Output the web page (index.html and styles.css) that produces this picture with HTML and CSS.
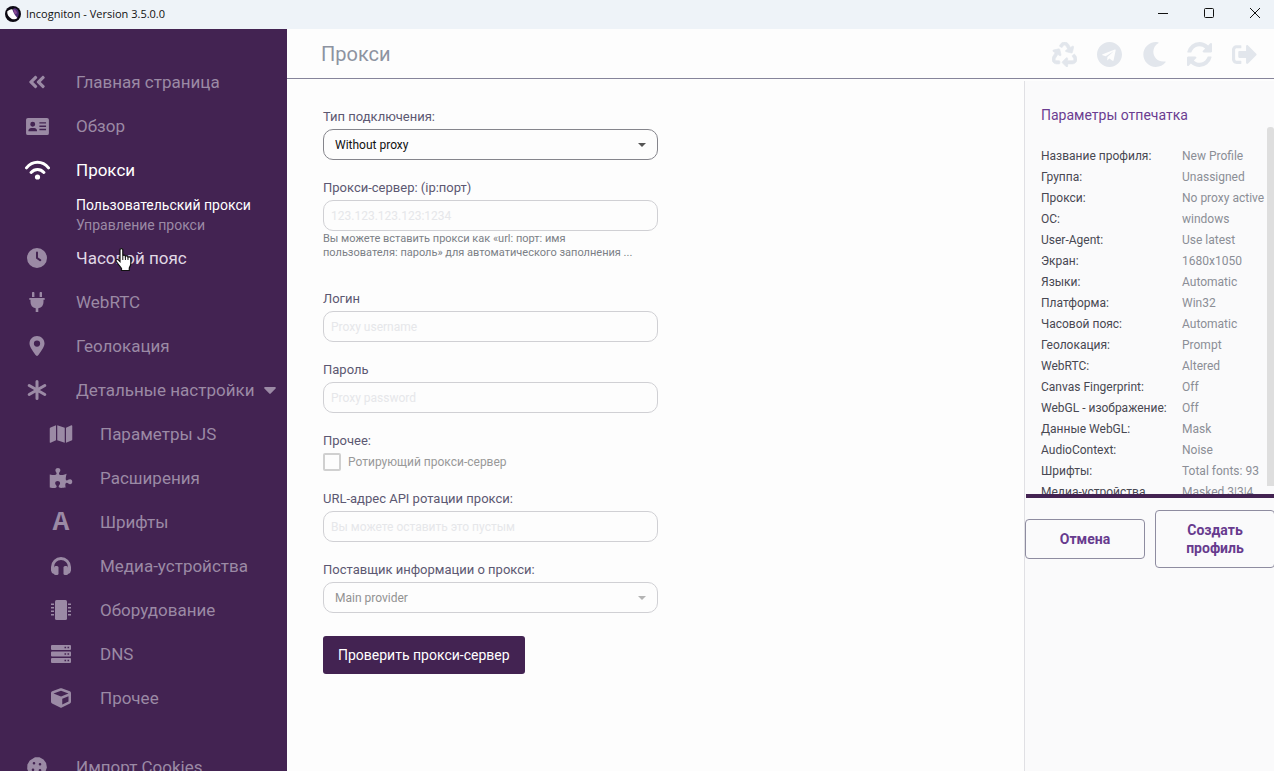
FILE: index.html
```html
<!DOCTYPE html>
<html lang="ru">
<head>
    <meta charset="UTF-8">
    <meta name="viewport" content="width=device-width, initial-scale=1.0">
    <title>Incogniton - Version 3.5.0.0</title>
    <link rel="stylesheet" href="styles.css">
</head>
<body>
<div class="titlebar">
    <svg class="app-logo" viewBox="0 0 16 16">
        <circle cx="8" cy="8" r="8" fill="#0b0812"/>
        <path d="M8.5 2.5C11 1.6 14 4 13.8 7.6c0 2-1 4-2.6 5.2L7 6z" fill="#4b2c74"/>
        <path d="M8.3 3c1.6.4 3.4 2.2 3.9 4.2l-2.6 1z" fill="#8a4a94"/>
        <path d="M2.2 5.6C3.4 4 5.6 3 7.4 3.3c.8 3.2 2.2 6 5 8.6-1.6 1.5-4 1.8-6 .8C3.800 11.400 2 8.600 2.200 5.600z" fill="#fff"/>
    </svg>
    <span class="app-name">Incogniton - Version 3.5.0.0</span>
    <div class="window-buttons">
        <button aria-label="Minimize"><svg viewBox="0 0 10 10"><path d="M0 5.500h10"/></svg></button>
        <button aria-label="Maximize"><svg viewBox="0 0 10 10"><rect x=".5" y=".5" width="9" height="9" rx="1"/></svg></button>
        <button aria-label="Close"><svg viewBox="0 0 10 10"><path d="M0 0l10 10M10 0L0 10"/></svg></button>
    </div>
</div>

<div class="app">
    <nav class="sidebar">
        <a href="#" class="nav-item">
            <svg class="icon" viewBox="0 0 448 512"><path d="M223.700 239l136-136c9.400-9.400 24.600-9.400 33.900 0l22.600 22.600c9.400 9.400 9.400 24.600 0 33.900L319.900 256l96.400 96.400c9.400 9.400 9.400 24.600 0 33.900L393.700 409c-9.400 9.400-24.600 9.400-33.900 0l-136-136c-9.500-9.400-9.500-24.600-.1-34zm-192 34l136 136c9.400 9.400 24.600 9.400 33.900 0l22.600-22.600c9.400-9.400 9.400-24.600 0-33.900L127.900 256l96.400-96.400c9.400-9.400 9.400-24.600 0-33.900L201.700 103c-9.400-9.400-24.600-9.400-33.900 0l-136 136c-9.500 9.400-9.500 24.600-.1 34z"/></svg>
            <span>Главная страница</span>
        </a>
        <a href="#" class="nav-item">
            <svg class="icon" viewBox="-1 -1 25 21"><path fill-rule="evenodd" d="M2 1h20a2 2 0 0 1 2 2v14a2 2 0 0 1-2 2H2a2 2 0 0 1-2-2V3a2 2 0 0 1 2-2zM7 5a2.600 2.600 0 1 0 0 5.200A2.600 2.600 0 0 0 7 5zM5.500 11.500A3 3 0 0 0 2.500 15h9a3 3 0 0 0-3-3.500zM14 5.500V7h7V5.500zM14 9v1.500h7V9zM14 12.500V14h7v-1.500z"/></svg>
            <span>Обзор</span>
        </a>
        <a href="#" class="nav-item active">
            <svg class="icon icon-line" viewBox="-.5 -.5 26 20"><path d="M2 7.400C8-.1 18-.1 24 7.400M6.600 12c3.600-4 9.200-4 12.800 0" stroke-width="3"/><circle cx="13" cy="16.500" r="2.600"/></svg>
            <span>Прокси</span>
        </a>
        <div class="submenu">
            <a href="#" class="active">Пользовательский прокси</a>
            <a href="#">Управление прокси</a>
        </div>
        <a href="#" class="nav-item hover">
            <svg class="icon" viewBox="0 0 20 20"><path fill-rule="evenodd" d="M10 0a10 10 0 1 0 0 20 10 10 0 0 0 0-20zM9 4.500a1 1 0 0 1 2 0v5l3 2.100a1 1 0 0 1-1.100 1.600l-3.500-2.400a1 1 0 0 1-.4-.8z"/></svg>
            <span>Часовой пояс</span>
        </a>
        <a href="#" class="nav-item">
            <svg class="icon" viewBox="0 0 16 20"><path d="M3 1a1.200 1.200 0 0 1 2.400 0v4H3zM10.600 1A1.200 1.200 0 0 1 13 1v4h-2.400zM1 6h14a.9.9 0 0 1 0 1.800h-.5V10a6.300 6.300 0 0 1-5.200 6.200V20H6.700v-3.800A6.300 6.300 0 0 1 1.500 10V7.800H1A.9.9 0 0 1 1 6z"/></svg>
            <span>WebRTC</span>
        </a>
        <a href="#" class="nav-item">
            <svg class="icon" viewBox="0 0 384 512"><path d="M215.700 499.200C267 435 384 279.400 384 192 384 86 298 0 192 0S0 86 0 192c0 87.400 117 243 168.300 307.200 12.300 15.300 35.100 15.300 47.400 0zM192 272a80 80 0 1 1 0-160 80 80 0 0 1 0 160z"/></svg>
            <span>Геолокация</span>
        </a>
        <a href="#" class="nav-item">
            <svg class="icon icon-line" viewBox="0 0 20 20"><path d="M10 1.500v17M2.200 5.500l15.600 9M17.800 5.500l-15.600 9" stroke-width="3"/></svg>
            <span>Детальные настройки</span>
            <svg class="caret" viewBox="0 0 12 7"><path d="M1 0h10a.9.9 0 0 1 .6 1.500L6.700 6.600a1 1 0 0 1-1.400 0L.4 1.500A.9.9 0 0 1 1 0z"/></svg>
        </a>
        <a href="#" class="nav-item nested">
            <svg class="icon" viewBox="0 0 576 512"><path d="M0 117.700v346.300c0 11.300 11.400 19 21.900 14.800L160 416V32L20.100 88A32 32 0 0 0 0 117.700zM192 416l192 64V96L192 32v384zM554 33.200L416 96v384l139.900-56a32 32 0 0 0 20.100-29.700V48c0-11.300-11.400-19-22-14.800z"/></svg>
            <span>Параметры JS</span>
        </a>
        <a href="#" class="nav-item nested">
            <svg class="icon" viewBox="0 0 576 512"><path d="M519.442 288.651c-41.519 0-59.500 31.593-82.058 31.593C377.409 320.244 432 144 432 144s-196.288 80-196.288-3.297c0-35.827 36.288-46.250 36.288-85.985C272 19.216 243.885 0 210.539 0c-34.654 0-66.366 18.891-66.366 56.346 0 41.364 31.711 59.277 31.711 81.750C175.885 207.719 0 166.758 0 166.758v333.237s178.635 41.047 178.635-28.662c0-22.473-40-40.107-40-81.471 0-37.456 29.250-56.346 63.577-56.346 33.673 0 61.788 19.216 61.788 54.717 0 39.735-36.288 50.158-36.288 85.985 0 60.803 129.675 25.730 181.230 25.730 0 0-34.725-120.101 25.827-120.101 35.962 0 46.423 36.152 86.308 36.152C556.712 416 576 387.990 576 354.443c0-34.199-18.962-65.792-56.558-65.792z"/></svg>
            <span>Расширения</span>
        </a>
        <a href="#" class="nav-item nested">
            <span class="icon-letter" aria-hidden="true">A</span>
            <span>Шрифты</span>
        </a>
        <a href="#" class="nav-item nested">
            <svg class="icon" viewBox="0 -1 20 20"><path d="M10 0A10 10 0 0 0 0 10v3.500A4 4 0 0 0 3 17V10a7 7 0 0 1 14 0v7a4 4 0 0 0 3-3.500V10A10 10 0 0 0 10 0z"/><rect x="3" y="9" width="4.500" height="9" rx="1.500"/><rect x="12.500" y="9" width="4.500" height="9" rx="1.500"/></svg>
            <span>Медиа-устройства</span>
        </a>
        <a href="#" class="nav-item nested">
            <svg class="icon" viewBox="0 0 20 20"><rect x="4" y="0" width="12" height="20" rx="1.500"/><path d="M0 3.500h3V5H0zM0 7h3v1.500H0zM0 10.500h3V12H0zM0 14h3v1.500H0zM17 3.500h3V5h-3zM17 7h3v1.500h-3zM17 10.500h3V12h-3zM17 14h3v1.500h-3z"/></svg>
            <span>Оборудование</span>
        </a>
        <a href="#" class="nav-item nested">
            <svg class="icon" viewBox="0 -1 20 20"><path fill-rule="evenodd" d="M1 0h18a1 1 0 0 1 1 1v3a1 1 0 0 1-1 1H1a1 1 0 0 1-1-1V1a1 1 0 0 1 1-1zM13.500 1.700v1.600h1.600V1.700zM16.500 1.700v1.600h1.600V1.700zM1 6.500h18a1 1 0 0 1 1 1v3a1 1 0 0 1-1 1H1a1 1 0 0 1-1-1v-3a1 1 0 0 1 1-1zM13.500 8.200v1.600h1.600V8.200zM16.500 8.200v1.600h1.600V8.200zM1 13h18a1 1 0 0 1 1 1v3a1 1 0 0 1-1 1H1a1 1 0 0 1-1-1v-3a1 1 0 0 1 1-1zM13.500 14.700v1.600h1.600v-1.600zM16.500 14.700v1.600h1.600v-1.600z"/></svg>
            <span>DNS</span>
        </a>
        <a href="#" class="nav-item nested">
            <svg class="icon" viewBox="0 0 512 512"><path d="M239.100 6.300l-208 78c-18.700 7-31.100 25-31.100 45v225.100c0 18.200 10.300 34.800 26.500 42.900l208 104c13.500 6.800 29.400 6.800 42.900 0l208-104c16.300-8.100 26.500-24.800 26.500-42.900V129.300c0-20-12.400-37.900-31.100-44.900l-208-78C262 2.200 250 2.200 239.100 6.300zM256 68.400l192 72v1.100l-192 78-192-78v-1.100l192-72zm32 356V275.500l160-65v133.900l-160 80z"/></svg>
            <span>Прочее</span>
        </a>
        <a href="#" class="nav-item detached">
            <svg class="icon" viewBox="0 0 20 20"><path fill-rule="evenodd" d="M8 .3l4.500-.1 4 2.300 2.600 3.500.8 4.500-1.600 4.500-3.400 3.500-4.400 1.400-4.700-.8-3.700-2.900L.2 12l.2-4.500L2.800 3.600zM7 5a1.300 1.300 0 1 0 0 2.600A1.300 1.300 0 0 0 7 5zM13 6a1.300 1.300 0 1 0 0 2.600A1.300 1.300 0 0 0 13 6zM6 11.500a1.300 1.300 0 1 0 0 2.600 1.300 1.300 0 0 0 0-2.600zM13 12a1.300 1.300 0 1 0 0 2.600 1.300 1.300 0 0 0 0-2.600z"/></svg>
            <span>Импорт Cookies</span>
        </a>
    </nav>

    <div class="page">
        <header class="topbar">
            <h1>Прокси</h1>
            <div class="tools">
                <button aria-label="Recycle"><svg viewBox="0 0 512 512"><path d="M184.561 261.903c3.232 13.997-12.123 24.635-24.068 17.168l-40.736-25.455-50.867 81.402C55.606 356.273 70.960 384 96.012 384H148c6.627 0 12 5.373 12 12v40c0 6.627-5.373 12-12 12H96.115c-75.334 0-121.302-83.048-81.408-146.880l50.822-81.388-40.725-25.448c-12.081-7.547-8.966-25.961 4.879-29.158l110.237-25.450c8.611-1.988 17.201 3.381 19.189 11.990l25.452 110.237zm98.561-182.915l41.289 66.076-40.740 25.457c-12.051 7.528-9 25.953 4.879 29.158l110.237 25.450c8.672 1.999 17.215-3.438 19.189-11.990l25.450-110.237c3.197-13.844-11.990-24.719-24.068-17.168l-40.687 25.424-41.263-66.082c-37.521-60.033-125.209-60.171-162.816 0l-17.963 28.766c-3.510 5.620-1.800 13.021 3.820 16.533l33.919 21.195c5.620 3.512 13.024 1.803 16.536-3.817l17.961-28.743c12.712-20.341 41.973-19.676 54.257-.022zM497.288 301.120l-27.515-44.065c-3.511-5.623-10.916-7.334-16.538-3.821l-33.861 21.159c-5.620 3.512-7.330 10.915-3.818 16.536l27.564 44.112c13.257 21.211-2.057 48.960-27.136 48.960H320V336.020c0-14.213-17.242-21.383-27.313-11.313l-80 79.981c-6.249 6.248-6.249 16.379 0 22.627l80 79.989C302.689 517.308 320 510.300 320 495.989V448h95.880c75.274 0 121.335-82.997 81.408-146.880z" stroke="#e2e6ec" stroke-width="14"/></svg></button>
                <button aria-label="Telegram"><svg viewBox="0 8 496 496"><path d="M248 8C111 8 0 119 0 256s111 248 248 248 248-111 248-248S385 8 248 8zm121.800 169.900l-40.700 191.800c-3 13.600-11.100 16.900-22.400 10.500l-62-45.700-29.900 28.800c-3.300 3.300-6.100 6.100-12.500 6.100l4.400-63.100 114.900-103.800c5-4.400-1.100-6.900-7.700-2.500l-142 89.400-61.200-19.100c-13.300-4.200-13.600-13.300 2.800-19.700l239.100-92.200c11.100-4 20.800 2.700 17.200 19.500z"/></svg></button>
                <button aria-label="Dark theme"><svg viewBox="0 0 512 512"><path d="M283.211 512c78.962 0 151.079-35.925 198.857-94.792 7.068-8.708-.639-21.430-11.562-19.350-124.203 23.654-238.262-71.576-238.262-196.954 0-72.222 38.662-138.635 101.498-174.394 9.686-5.512 7.250-20.197-3.756-22.230A258.156 258.156 0 0 0 283.211 0c-141.309 0-256 114.511-256 256 0 141.309 114.511 256 256 256z"/></svg></button>
                <button aria-label="Refresh"><svg viewBox="128 128 1536 1536"><path d="M1639 1056q0 5-1 7-64 268-268 434.500t-478 166.500q-146 0-282.500-55t-243.500-157l-129 129q-19 19-45 19t-45-19-19-45v-448q0-26 19-45t45-19h448q26 0 45 19t19 45-19 45l-137 137q71 66 161 102t187 36q134 0 250-65t186-179q11-17 53-117 8-23 30-23h192q13 0 22.500 9.500t9.500 22.500zm25-800v448q0 26-19 45t-45 19h-448q-26 0-45-19t-19-45 19-45l138-138q-148-137-349-137-134 0-250 65t-186 179q-11 17-53 117-8 23-30 23h-199q-13 0-22.500-9.500t-9.500-22.500v-7q65-268 270-434.500t480-166.500q146 0 284 55.500t245 156.500l130-129q19-19 45-19t45 19 19 45z"/></svg></button>
                <button aria-label="Log out"><svg viewBox="0 0 512 512"><path d="M497 273L329 441c-15 15-41 4.500-41-17v-96H152c-13.300 0-24-10.700-24-24v-96c0-13.300 10.700-24 24-24h136V88c0-21.400 25.900-32 41-17l168 168c9.300 9.400 9.300 24.600 0 34zM192 436v-40c0-6.600-5.400-12-12-12H96c-17.700 0-32-14.300-32-32V160c0-17.700 14.300-32 32-32h84c6.600 0 12-5.400 12-12V76c0-6.600-5.400-12-12-12H96c-53 0-96 43-96 96v192c0 53 43 96 96 96h84c6.600 0 12-5.400 12-12z"/></svg></button>
            </div>
        </header>

        <div class="columns">
            <form class="proxy-form">
                <div class="field">
                    <label for="type">Тип подключения:</label>
                    <div class="select">
                        <select id="type"><option>Without proxy</option></select>
                        <span class="arrow"></span>
                    </div>
                </div>
                <div class="field field-server">
                    <label for="server">Прокси-сервер: (ip:порт)</label>
                    <input type="text" id="server" placeholder="123.123.123.123:1234" disabled>
                    <p class="hint">Вы можете вставить прокси как «url: порт: имя<br>пользователя: пароль» для автоматического заполнения ...</p>
                </div>
                <div class="field">
                    <label for="login">Логин</label>
                    <input type="text" id="login" placeholder="Proxy username" disabled>
                </div>
                <div class="field">
                    <label for="password">Пароль</label>
                    <input type="text" id="password" placeholder="Proxy password" disabled>
                </div>
                <div class="field">
                    <span class="label">Прочее:</span>
                    <label class="check"><input type="checkbox" disabled>Ротирующий прокси-сервер</label>
                </div>
                <div class="field">
                    <label for="api">URL-адрес API ротации прокси:</label>
                    <input type="text" id="api" placeholder="Вы можете оставить это пустым" disabled>
                </div>
                <div class="field">
                    <label for="provider">Поставщик информации о прокси:</label>
                    <div class="select disabled">
                        <select id="provider" disabled><option>Main provider</option></select>
                        <span class="arrow"></span>
                    </div>
                </div>
                <button type="button" class="check-proxy">Проверить прокси-сервер</button>
            </form>

            <aside class="summary">
                <h2>Параметры отпечатка</h2>
                <div class="scroller">
                    <table>
                        <tr><th>Название профиля:</th><td>New Profile</td></tr>
                        <tr><th>Группа:</th><td>Unassigned</td></tr>
                        <tr><th>Прокси:</th><td>No proxy active</td></tr>
                        <tr><th>ОС:</th><td>windows</td></tr>
                        <tr><th>User-Agent:</th><td>Use latest</td></tr>
                        <tr><th>Экран:</th><td>1680x1050</td></tr>
                        <tr><th>Языки:</th><td>Automatic</td></tr>
                        <tr><th>Платформа:</th><td>Win32</td></tr>
                        <tr><th>Часовой пояс:</th><td>Automatic</td></tr>
                        <tr><th>Геолокация:</th><td>Prompt</td></tr>
                        <tr><th>WebRTC:</th><td>Altered</td></tr>
                        <tr><th>Canvas Fingerprint:</th><td>Off</td></tr>
                        <tr><th>WebGL - изображение:</th><td>Off</td></tr>
                        <tr><th>Данные WebGL:</th><td>Mask</td></tr>
                        <tr><th>AudioContext:</th><td>Noise</td></tr>
                        <tr><th>Шрифты:</th><td>Total fonts: 93</td></tr>
                        <tr><th>Медиа-устройства</th><td>Masked 3|3|4</td></tr>
                    </table>
                    <div class="thumb"></div>
                </div>
                <div class="actions">
                    <button>Отмена</button>
                    <button>Создать профиль</button>
                </div>
            </aside>
        </div>
    </div>
</div>

<svg class="pointer" viewBox="0 0 17 24">
    <path d="M5 1.800c0-1.600 2.800-1.600 2.800 0v6c.3-1 2.500-.9 2.600.5.600-.9 2.500-.5 2.600.9.800-.7 2.800-.2 2.800 1.500v5c0 2-1.300 3.200-1.500 4.500V22.500H6.500v-2C5 18.500 3 16 1.300 13.500c-1-1.600.8-2.800 2-1.700L5 13.500z" fill="#fff" stroke="#111" stroke-width="1.200"/>
    <path d="M7.800 7.500V12M10.400 8.500V12M13 9.500V12" stroke="#111" fill="none"/>
</svg>
</body>
</html>
```
FILE: styles.css
```css
* {
    box-sizing: border-box;
}

body {
    margin: 0;
    height: 100vh;
    display: flex;
    flex-direction: column;
    overflow: hidden;
    background-color: #fdfdfd;
    font-family: Roboto, sans-serif;
}

a {
    color: inherit;
    text-decoration: none;
}

button {
    font-family: inherit;
    cursor: pointer;
}

.titlebar {
    flex: none;
    display: flex;
    align-items: center;
    height: 29px;
    padding-left: 5px;
    background-color: #eef3f8;
}

.app-logo {
    width: 16px;
    height: 16px;
    margin: 0 5px 2px 0;
}

.app-name {
    flex: 1;
    padding-bottom: 2px;
    font-family: "Open Sans", sans-serif;
    font-size: 11px;
    color: #111;
}

.window-buttons {
    display: flex;
    margin-right: -4px;
}

.window-buttons button {
    display: flex;
    justify-content: center;
    width: 46px;
    padding: 0 0 3px;
    border: 0;
    background: none;
}

.window-buttons svg {
    width: 10px;
    height: 10px;
    overflow: visible;
    fill: none;
    stroke: #111;
}

.app {
    flex: 1;
    display: flex;
    min-height: 0;
}

/* sidebar */

.sidebar {
    flex: none;
    width: 287px;
    padding-top: 31px;
    overflow: hidden;
    background-color: #432352;
    color: #9b8aa5;
}

.nav-item {
    display: flex;
    align-items: center;
    height: 44px;
    padding-left: 24px;
    font-size: 17px;
    white-space: nowrap;
}

.nav-item.nested {
    padding-left: 48px;
}

.nav-item.detached {
    margin-top: 25px;
}

.nav-item .icon {
    flex: none;
    width: 26px;
    height: 20px;
    margin-right: 26px;
    fill: currentColor;
}

.nav-item .icon-line path {
    fill: none;
    stroke: currentColor;
    stroke-linecap: round;
}

.icon-letter {
    width: 26px;
    margin-right: 26px;
    font-family: "Liberation Mono", monospace;
    font-size: 28px;
    font-weight: bold;
    text-align: center;
}

.caret {
    width: 12px;
    height: 7px;
    margin-left: 10px;
    fill: currentColor;
}

.nav-item.active,
.submenu .active {
    color: #fff;
}

.nav-item.hover span {
    color: #e0d8e5;
}

.submenu {
    display: flex;
    flex-direction: column;
    height: 44px;
    padding: 3px 0 0 76px;
    font-size: 14px;
    line-height: 20px;
}

/* page */

.page {
    flex: 1;
    display: flex;
    flex-direction: column;
    min-width: 0;
}

.topbar {
    flex: none;
    display: flex;
    align-items: center;
    justify-content: space-between;
    height: 50px;
    padding: 0 17px 0 34px;
    border-bottom: 1px solid #86849a;
}

.topbar h1 {
    margin: 0;
    font-size: 20px;
    font-weight: normal;
    color: #8d93a1;
}

.tools {
    display: flex;
    gap: 20px;
    padding-top: 1px;
}

.tools button {
    display: flex;
    padding: 0;
    border: 0;
    background: none;
}

.tools svg {
    width: 25px;
    height: 25px;
    fill: #e2e6ec;
}

.columns {
    flex: 1;
    display: flex;
    min-height: 0;
}

.proxy-form {
    flex: 1;
    padding: 30px 36px;
}

.field {
    width: 335px;
    margin-bottom: 20px;
}

.field-server {
    margin-bottom: 31px;
}

.field > label:first-child,
.label {
    display: block;
    margin-bottom: 4px;
    font-size: 13px;
    line-height: 16px;
    color: #5c5872;
}

.field input[type=text],
.field select {
    display: block;
    width: 100%;
    height: 31px;
    padding: 0 7px;
    border: 1px solid #d0d0d4;
    border-radius: 10px;
    background: none;
    font-family: inherit;
    font-size: 12px;
}

.field input::placeholder {
    color: #e6e7ea;
}

.select {
    display: grid;
    align-items: center;
}

.select select,
.select .arrow {
    grid-area: 1 / 1;
}

.field .select select {
    appearance: none;
    padding: 0 11px;
    border-color: #85858c;
    color: #111;
    opacity: 1;
}

.select .arrow {
    justify-self: end;
    margin-right: 12px;
    border: 4px solid transparent;
    border-top-color: #555;
    border-bottom: 0;
    pointer-events: none;
}

.field .select.disabled select {
    border-color: #d0d0d4;
    color: #929292;
}

.select.disabled .arrow {
    border-top-color: #b4b4b4;
}

.hint {
    margin: 1px 0 0;
    font-size: 11px;
    line-height: 14px;
    color: #7b7f86;
    white-space: nowrap;
}

.check {
    display: flex;
    align-items: center;
    gap: 7px;
    font-size: 12px;
    color: #999;
}

.check input {
    appearance: none;
    width: 18px;
    height: 18px;
    margin: 0;
    border: 2px solid #d0d0d0;
    border-radius: 2px;
}

.check-proxy {
    height: 38px;
    margin-top: 3px;
    padding: 0 15px;
    border: 0;
    border-radius: 3px;
    background-color: #432352;
    font-size: 14px;
    color: #fff;
}

/* fingerprint summary */

.summary {
    flex: none;
    width: 250px;
    margin-top: 2px;
    border-left: 1px solid #e0e0e4;
    background-color: #fafafb;
}

.summary h2 {
    margin: 0;
    padding: 24px 16px 0;
    font-size: 14px;
    font-weight: normal;
    line-height: 20px;
    color: #6b3d91;
}

.scroller {
    display: flex;
    justify-content: space-between;
    height: 373px;
    margin-left: 1px;
    overflow: hidden;
    border-bottom: 4px solid #432352;
}

.scroller table {
    height: max-content;
    margin: 21px 0 0 15px;
    border-spacing: 0;
    font-size: 12px;
    line-height: 21px;
    text-align: left;
    white-space: nowrap;
}

.scroller th {
    width: 141px;
    padding: 0;
    font-weight: normal;
    color: #484852;
}

.scroller td {
    padding: 0;
    color: #8b8e96;
}

.thumb {
    width: 7px;
    height: 359px;
    margin-top: 2px;
    background-color: #dedede;
    border-radius: 3px 3px 0 0;
}

.actions {
    display: flex;
    align-items: center;
    gap: 10px;
    margin-top: 12px;
}

.actions button {
    flex: none;
    width: 120px;
    min-height: 40px;
    padding: 10px 20px;
    border: 1px solid #8e8ca0;
    border-radius: 4px;
    background: none;
    font-size: 14px;
    font-weight: bold;
    line-height: 18px;
    color: #673b8e;
}

/* hand cursor over the menu */
.pointer {
    position: absolute;
    top: 248px;
    left: 115px;
    width: 17px;
    height: 24px;
}
```
